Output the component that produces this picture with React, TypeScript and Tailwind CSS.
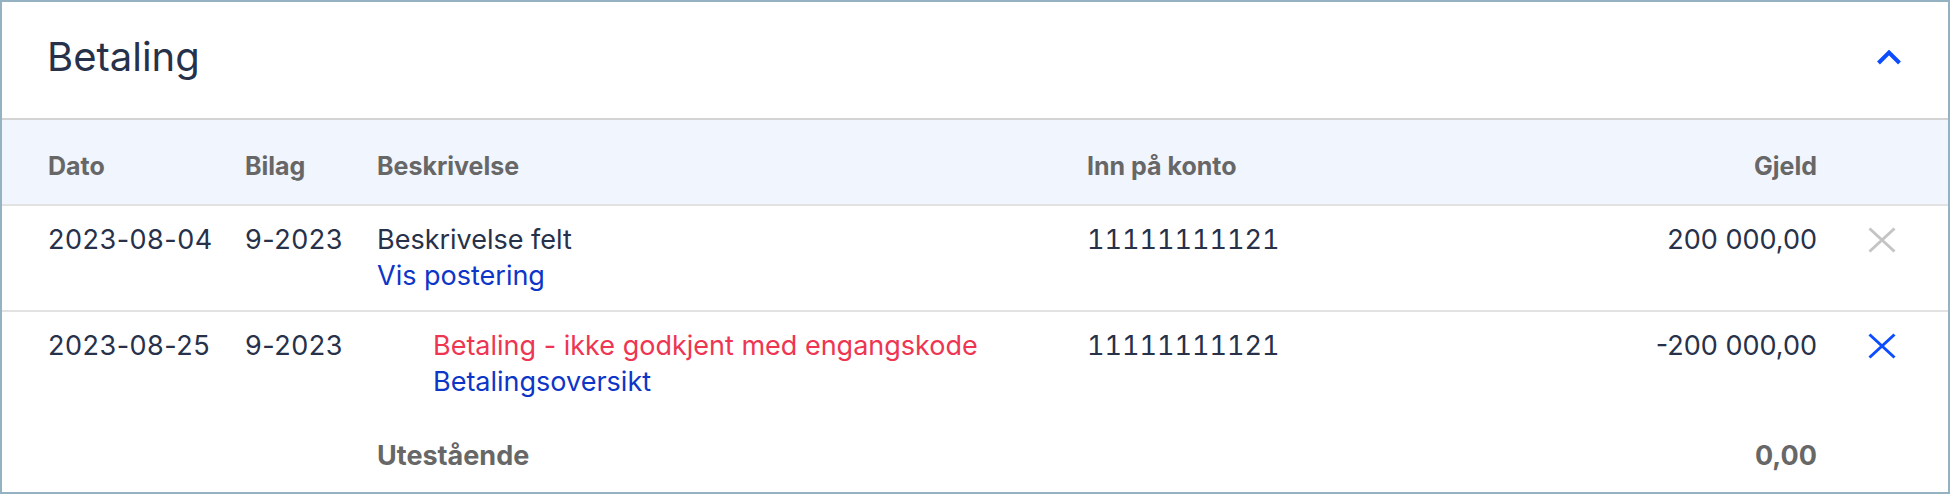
import React from "react";

const Cross = ({ color }: { color: string }) => (
  <svg width="28" height="26" viewBox="0 0 28 26" fill="none">
    <path d="M1.5 1.5 L26.5 24.5 M26.5 1.5 L1.5 24.5" stroke={color} strokeWidth="3" />
  </svg>
);

const grid =
  "grid grid-cols-[197px_132px_710px_413px_317px_79px] pl-[46px] pr-[52px]";

export default function App() {
  return (
    <div
      className="w-[1950px] h-[494px] border-2 border-[#94b2c2] bg-white flex flex-col text-[#27314a]"
      style={{ fontFamily: "Inter, 'Noto Sans', sans-serif" }}
    >
      <div className="h-[116px] flex items-center justify-between pl-[45px] pr-[47px] pb-[6px]">
        <h1 className="text-[40px] leading-[48px] font-normal text-[#27314a]">Betaling</h1>
        <svg width="24" height="15" viewBox="0 0 24 15" fill="none">
          <path d="M1.5 13 L12 2.5 L22.5 13" stroke="#0b4dff" strokeWidth="4" />
        </svg>
      </div>
      <div
        className={`${grid} h-[88px] bg-[#f1f5fe] border-t-2 border-b-2 border-t-[#d3d3d3] border-b-[#e2e2e2] pt-[28px] text-[25px] leading-[36px] font-bold text-[#676767]`}
      >
        <div>Dato</div>
        <div>Bilag</div>
        <div>Beskrivelse</div>
        <div>Inn på konto</div>
        <div className="text-right">Gjeld</div>
        <div></div>
      </div>
      <div
        className={`${grid} h-[106px] border-b-2 border-[#e2e2e2] pt-[16px] text-[27px] leading-[36px]`}
      >
        <div className="tracking-[0.5px]">2023-08-04</div>
        <div className="tracking-[0.5px]">9-2023</div>
        <div className="flex flex-col">
          <span>Beskrivelse felt</span>
          <span className="text-[#0d35c8]">Vis postering</span>
        </div>
        <div className="tabular-nums">11111111121</div>
        <div className="text-right">200 000,00</div>
        <div className="flex justify-end items-center h-[36px]">
          <Cross color="#c4c4c4" />
        </div>
      </div>
      <div className={`${grid} h-[104px] pt-[16px] text-[27px] leading-[36px]`}>
        <div className="tracking-[0.5px]">2023-08-25</div>
        <div className="tracking-[0.5px]">9-2023</div>
        <div className="flex flex-col pl-[56px]">
          <span className="text-[#ee3552]">Betaling - ikke godkjent med engangskode</span>
          <span className="text-[#0d35c8]">Betalingsoversikt</span>
        </div>
        <div className="tabular-nums">11111111121</div>
        <div className="text-right">-200 000,00</div>
        <div className="flex justify-end items-center h-[36px]">
          <Cross color="#0b4dff" />
        </div>
      </div>
      <div className={`${grid} flex-1 pt-[22px] text-[27px] leading-[36px] font-bold text-[#676767]`}>
        <div></div>
        <div></div>
        <div>Utestående</div>
        <div></div>
        <div className="text-right">0,00</div>
        <div></div>
      </div>
    </div>
  );
}
